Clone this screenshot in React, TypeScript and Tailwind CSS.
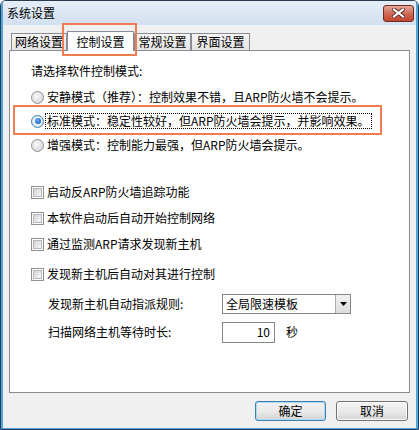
import React from "react";

const font = "font-['Noto_Sans_CJK_SC','Noto_Sans',sans-serif]";

const Radio: React.FC<{ checked?: boolean }> = ({ checked }) => (
    <div
        className={`w-[13px] h-[13px] rounded-full border flex items-center justify-center shrink-0 ${
            checked
                ? "border-[#3c7fb1] bg-[radial-gradient(circle_at_50%_40%,#ffffff,#c7dff2)]"
                : "border-[#8e8f8f] bg-[radial-gradient(circle_at_40%_35%,#f8f8f8,#cfcfcf)]"
        }`}
    >
        {checked && (
            <div className="w-[6px] h-[6px] rounded-full bg-[radial-gradient(circle_at_40%_35%,#5fb2ff,#0b4fa8)]" />
        )}
    </div>
);

const Checkbox: React.FC = () => (
    <div className="w-[13px] h-[13px] border border-[#8e8f8f] bg-white p-[1px] shrink-0">
        <div className="w-full h-full border border-[#b4b8bd] bg-gradient-to-br from-[#d4d4d4] to-[#f6f6f6]" />
    </div>
);

const Tab: React.FC<{ label: string; active?: boolean; width: string }> = ({ label, active, width }) => (
    <div
        className={`${width} flex items-center justify-center border border-b-0 border-[#898c95] ${
            active
                ? "h-[20px] bg-white relative z-10 -mb-px"
                : "h-[17px] bg-gradient-to-b from-[#f4f4f4] to-[#e4e4e4]"
        }`}
    >
        {label}
    </div>
);

export default function App() {
    const radios = [
        { text: "安静模式（推荐）：控制效果不错，且ARP防火墙不会提示。", checked: false, h: "h-[24px]" },
        { text: "标准模式：稳定性较好，但ARP防火墙会提示，并影响效果。", checked: true, h: "h-[24px]" },
        { text: "增强模式：控制能力最强，但ARP防火墙会提示。", checked: false, h: "h-[24px]" },
    ];
    const checks = [
        "启动反ARP防火墙追踪功能",
        "本软件启动后自动开始控制网络",
        "通过监测ARP请求发现新主机",
    ];

    return (
        <div className={`${font} text-[12px] leading-[14px] text-black w-[419px] h-[430px] relative`}>
            <div className="w-full h-full border border-[#2a3a50] rounded-t-[6px] overflow-hidden flex flex-col bg-[#f0f0f0]">
                <div className="flex-1 flex flex-col border-x-2 border-b border-[#4ba6dc]">
                    {/* title bar */}
                    <div className="h-[24px] flex items-center justify-between pl-[4px] pr-[2px] bg-gradient-to-b from-[#e6eef8] to-[#d2e0f0]">
                        <span>系统设置</span>
                        <div className="w-[31px] h-[17px] rounded-[3px] border border-[#6e2c22] bg-gradient-to-b from-[#e6a89c] via-[#cf6a56] to-[#c0452e] flex items-center justify-center">
                            <svg width="13" height="10" viewBox="0 0 13 10">
                                <path d="M2 1.5 L11 8.5 M11 1.5 L2 8.5" stroke="#5a2a22" strokeWidth="4" strokeLinecap="square" />
                                <path d="M2 1.5 L11 8.5 M11 1.5 L2 8.5" stroke="#ffffff" strokeWidth="2.2" strokeLinecap="square" />
                            </svg>
                        </div>
                    </div>

                    {/* body */}
                    <div className="flex-1 flex flex-col pt-[6px] px-[6px] pb-[7px]">
                        <div className="h-[19px] flex items-end pl-[2px]">
                            <Tab label="网络设置" width="w-[56px]" />
                            <Tab label="控制设置" width="w-[67px]" active />
                            <Tab label="常规设置" width="w-[57px]" />
                            <Tab label="界面设置" width="w-[59px]" />
                        </div>

                        <div className="h-[343px] border border-[#898c95] bg-white flex flex-col pt-[12px]">
                            <div className="h-[16px] flex items-center pl-[21px]">请选择软件控制模式:</div>
                            <div className="mt-[6px] flex flex-col">
                                {radios.map(r => (
                                    <div key={r.text} className={`${r.h} flex items-center pl-[21px]`}>
                                        <Radio checked={r.checked} />
                                        <span
                                            className={`ml-[2px] px-[1px] ${
                                                r.checked ? "outline outline-1 outline-dotted outline-black" : ""
                                            }`}
                                        >
                                            {r.text}
                                        </span>
                                    </div>
                                ))}
                            </div>

                            <div className="mt-[22px] flex flex-col">
                                {checks.map(c => (
                                    <div key={c} className="h-[26px] flex items-center pl-[21px] gap-[3px]">
                                        <Checkbox />
                                        <span>{c}</span>
                                    </div>
                                ))}
                                <div className="mt-[4px] h-[26px] flex items-center pl-[21px] gap-[3px]">
                                    <Checkbox />
                                    <span>发现新主机后自动对其进行控制</span>
                                </div>
                            </div>

                            <div className="mt-[6px] h-[22px] flex items-center pl-[38px]">
                                <span className="w-[174px]">发现新主机自动指派规则:</span>
                                <div className="w-[129px] h-[20px] border border-[#828790] bg-white flex items-stretch">
                                    <span className="flex-1 flex items-center pl-[3px]">全局限速模板</span>
                                    <div className="w-[15px] border-l border-[#acacac] bg-gradient-to-b from-[#f2f2f2] to-[#dcdcdc] flex items-center justify-center">
                                        <svg width="7" height="4" viewBox="0 0 7 4">
                                            <path d="M0 0 H7 L3.5 4 Z" fill="#000" />
                                        </svg>
                                    </div>
                                </div>
                            </div>

                            <div className="mt-[6px] h-[22px] flex items-center pl-[38px]">
                                <span className="w-[174px]">扫描网络主机等待时长:</span>
                                <div className="w-[53px] h-[21px] border border-[#828790] bg-white flex items-center justify-end pr-[4px]">
                                    10
                                </div>
                                <span className="ml-[11px]">秒</span>
                            </div>
                        </div>

                        <div className="mt-[8px] flex justify-end gap-[10px] pr-[2px]">
                            <button className="w-[71px] h-[20px] rounded-[3px] border border-[#3c7fb1] bg-gradient-to-b from-[#f2f2f2] via-[#ebebeb] to-[#d4d4d4] shadow-[inset_0_0_0_1px_#a8dcf5] flex items-center justify-center">
                                确定
                            </button>
                            <button className="w-[72px] h-[20px] rounded-[3px] border border-[#707070] bg-gradient-to-b from-[#f2f2f2] via-[#ebebeb] to-[#d4d4d4] shadow-[inset_0_0_0_1px_#fcfcfc] flex items-center justify-center">
                                取消
                            </button>
                        </div>
                    </div>
                </div>
            </div>

            {/* annotation highlights */}
            <div className="absolute left-[62px] top-[23px] w-[75px] h-[33px] border-2 border-[#f27c52] pointer-events-none" />
            <div className="absolute left-[13px] top-[105px] w-[369px] h-[30px] border-2 border-[#f27c52] pointer-events-none" />
        </div>
    );
}
